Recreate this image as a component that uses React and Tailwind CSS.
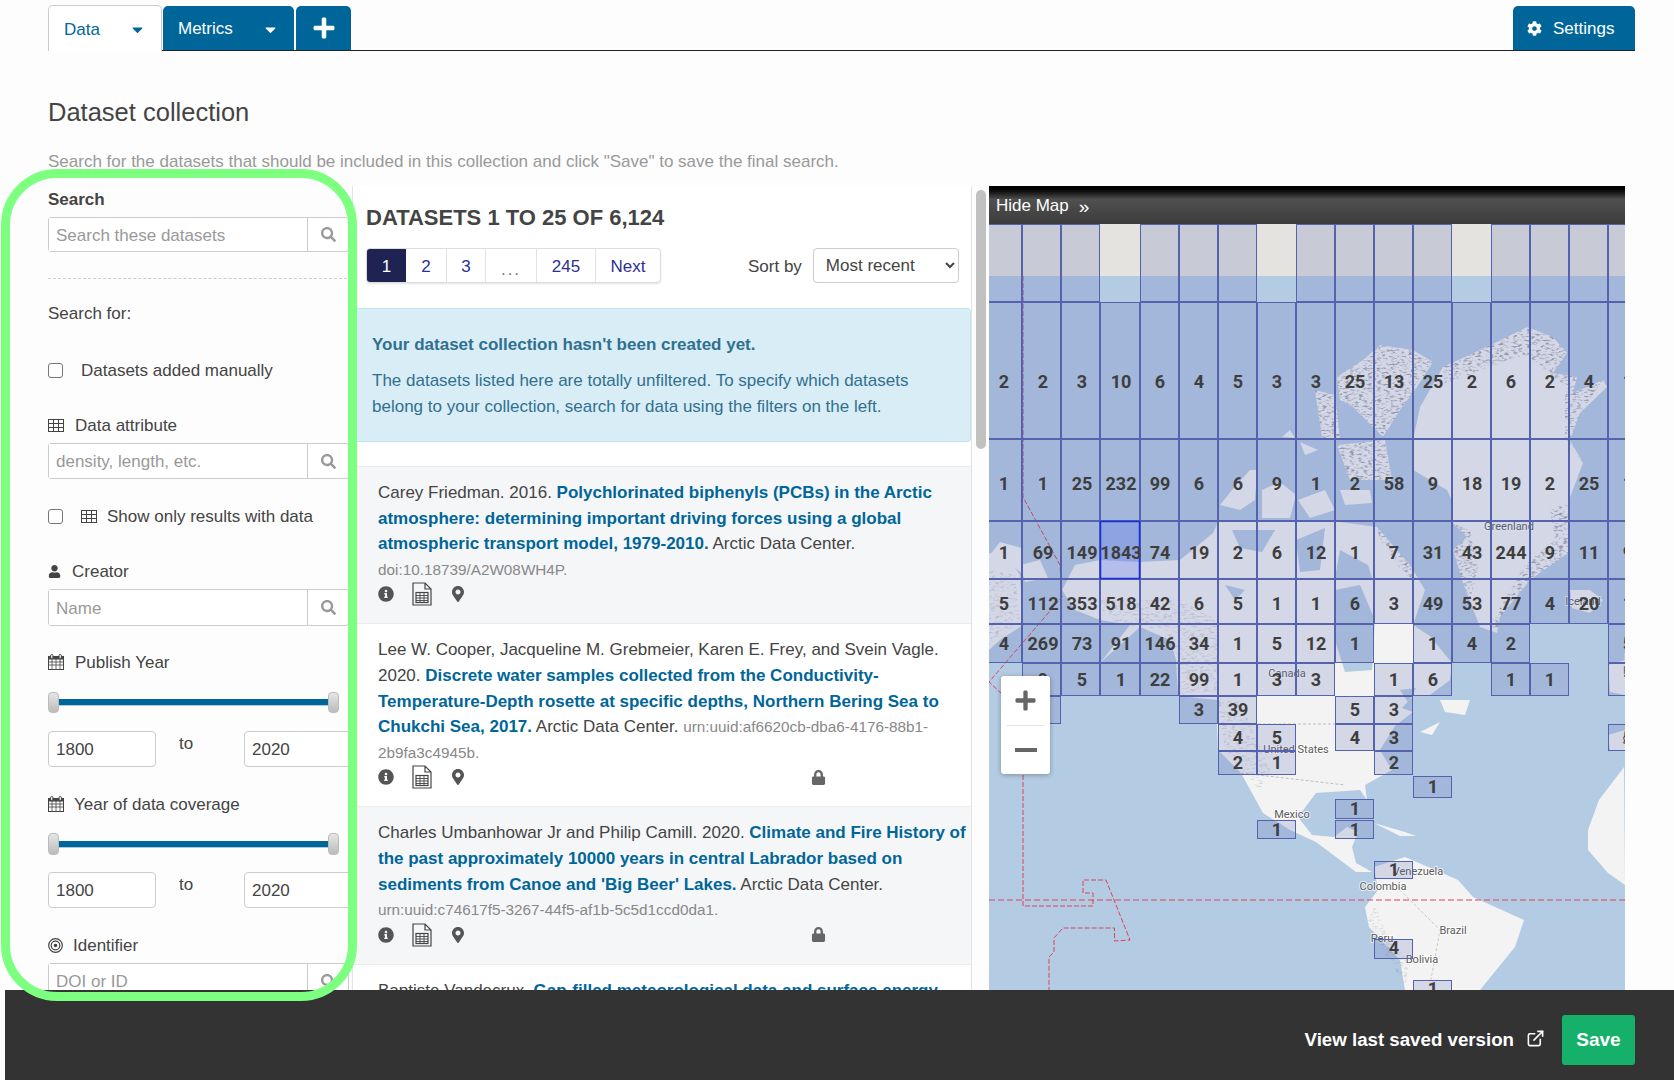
import React from "react";
import { FaCaretDown, FaPlus, FaCog, FaSearch, FaUser, FaInfoCircle, FaMapMarkerAlt, FaLock } from "react-icons/fa";
import { ExternalLink } from "lucide-react";

const X = [983, 1022, 1061, 1100, 1140, 1179, 1218, 1257, 1296, 1335, 1374, 1413, 1452, 1491, 1530, 1569, 1608, 1647];

const rows = [
  { y0: 302, y1: 439, ly: 381, v: ["2","2","3","10","6","4","5","3","3","25","13","25","2","6","2","4","1"] },
  { y0: 439, y1: 521, ly: 483, v: ["1","1","25","232","99","6","6","9","1","2","58","9","18","19","2","25","1"] },
  { y0: 521, y1: 579, ly: 552, v: ["1","69","149","1843","74","19","2","6","12","1","7","31","43","244","9","11","9"] },
  { y0: 579, y1: 624, ly: 603, v: ["5","112","353","518","42","6","5","1","1","6","3","49","53","77","4","20","1"] },
  { y0: 624, y1: 663, ly: 643, v: ["4","269","73","91","146","34","1","5","12","1","","1","4","2","","","5"] },
  { y0: 663, y1: 696, ly: 679, v: ["","9","5","1","22","99","1","3","3","","1","6","","1","1","","1"] },
  { y0: 696, y1: 724, ly: 709, v: ["","1","","","","3","39","","","5","3","","","","","",""] },
  { y0: 724, y1: 751, ly: 737, v: ["","","","","","","4","5","","4","3","","","","","","5"] },
  { y0: 751, y1: 775, ly: 762, v: ["","","","","","","2","1","","","2","","","","","",""] },
  { y0: 776, y1: 798, ly: 786, v: ["","","","","","","","","","","","1","","","","",""] },
  { y0: 799, y1: 819, ly: 808, v: ["","","","","","","","","","1","","","","","","",""] },
  { y0: 820, y1: 839, ly: 829, v: ["","","","","","","","1","","1","","","","","","",""] },
  { y0: 861, y1: 879, ly: 869, v: ["","","","","","","","","","","1","","","","","",""] },
  { y0: 939, y1: 959, ly: 947, v: ["","","","","","","","","","","4","","","","","",""] },
  { y0: 980, y1: 1010, ly: 988, v: ["","","","","","","","","","","","1","","","","",""] },
];

const land = [
  "989,553 1010,560 1020,575 1023,625 1000,640 989,650",
  "1000,542 1022,548 1024,575 1005,560 989,556",
  "1062,590 1075,565 1100,560 1140,562 1180,560 1213,533 1218,522 1262,522 1300,520 1335,522 1340,522 1377,527 1410,565 1425,590 1413,625 1430,636 1452,663 1450,680 1430,695 1413,696 1402,708 1413,712 1395,726 1380,750 1392,770 1365,785 1367,800 1360,790 1316,793 1298,817 1312,835 1334,837 1347,827 1358,832 1352,847 1356,863 1372,872 1356,872 1316,842 1290,830 1263,813 1241,773 1218,750 1217,723 1218,700 1178,696 1176,660 1170,640 1140,627 1100,663 1130,625 1100,620 1075,610",
  "1374,867 1405,857 1440,872 1458,880 1473,897 1524,920 1515,947 1480,990 1405,990 1400,960 1369,927 1365,907 1378,890",
  "1374,823 1405,832 1416,836 1400,836",
  "1624,767 1599,800 1588,830 1588,850 1608,873 1625,885",
  "1443,367 1480,350 1507,337 1527,327 1553,337 1567,353 1553,373 1577,377 1573,393 1603,380 1607,387 1580,413 1570,440 1583,463 1568,503 1568,553 1530,580 1500,617 1497,633 1480,627 1463,583 1453,550 1467,537 1453,523 1453,503 1447,490 1413,470 1413,440 1420,407",
  "1337,377 1363,360 1380,345 1413,350 1433,362 1417,387 1400,410 1383,437 1353,407 1340,400",
  "1315,390 1335,395 1340,440 1322,438",
  "1337,445 1385,440 1392,480 1350,480",
  "1340,490 1370,490 1372,503 1345,505",
  "1220,505 1232,490 1250,470 1257,470 1255,500 1240,510",
  "1262,490 1280,482 1296,495 1290,518 1262,518",
  "1298,500 1325,490 1335,510 1310,518",
  "1290,430 1295,438 1282,437",
  "1300,442 1318,450 1305,455",
  "1570,590 1590,590 1603,600 1590,613 1572,608",
  "1608,665 1625,660 1625,695 1610,692",
  "1608,735 1625,730 1625,751 1610,751",
  "1440,700 1470,700 1465,715 1445,712",
  "1420,732 1440,722 1432,735",
  "1020,565 1040,560 1048,578 1025,582",
  "1075,595 1095,590 1098,605 1080,608",
];

const water = [
  "1335,590 1360,585 1375,620 1372,670 1345,672 1335,640",
  "1225,585 1245,590 1235,600",
  "1232,530 1275,530 1262,552 1240,548",
  "1296,540 1325,528 1320,570 1300,572",
  "1340,550 1368,565 1372,578 1335,578",
  "1400,690 1416,688 1408,702",
];

const strongRelief = [
  "1443,367 1480,350 1527,327 1553,337 1567,353 1553,373 1577,377 1573,393 1603,380 1580,413 1570,440 1583,463 1565,440 1565,385 1525,355 1480,370 1445,385",
  "1337,377 1363,360 1380,345 1413,350 1433,362 1417,387 1400,410 1383,437 1353,407 1340,400",
  "1315,390 1335,395 1340,440 1322,438",
  "1337,445 1385,440 1392,480 1350,480",
  "1568,503 1568,553 1530,580 1500,617 1497,633 1490,625 1525,565 1555,540 1550,510",
  "1453,523 1467,537 1453,550 1463,583 1470,600 1478,570 1470,530",
  "1377,527 1410,565 1417,580 1405,575 1380,540",
];

const softRelief = [
  "1090,600 1180,600 1218,620 1218,690 1180,695 1176,660 1165,630 1120,625",
  "1218,700 1240,700 1270,770 1260,790 1225,750",
  "989,570 1015,575 1020,625 995,640 989,645",
  "1375,905 1385,930 1410,965 1405,985 1380,945 1368,920",
];

const places = [
  ["Greenland", 1509, 526], ["Iceland", 1583, 601], ["Canada", 1287, 673], ["United States", 1296, 749],
  ["Mexico", 1292, 814], ["Venezuela", 1418, 871], ["Colombia", 1383, 886], ["Brazil", 1453, 930],
  ["Peru", 1382, 938], ["Bolivia", 1422, 959], ["United", 1640, 659], ["Kingdom", 1645, 670], ["Spain", 1636, 740],
];

function MapDrawing() {
  return (
    <svg width="636" height="766" viewBox="989 224 636 766" className="block">
      <defs>
        <filter id="relief" x="0" y="0" width="100%" height="100%">
          <feTurbulence type="fractalNoise" baseFrequency="0.22 0.5" numOctaves="2" seed="4" />
          <feColorMatrix values="0 0 0 0 0.28  0 0 0 0 0.28  0 0 0 0 0.33  2.6 2.6 0 0 -2.55" />
        </filter>
        <clipPath id="strong-relief">
          {strongRelief.map((p, i) => (
            <polygon key={i} points={p} />
          ))}
        </clipPath>
        <clipPath id="soft-relief">
          {softRelief.map((p, i) => (
            <polygon key={i} points={p} />
          ))}
        </clipPath>
      </defs>
      <rect x="989" y="224" width="636" height="766" fill="#b4cbe4" />
      <rect x="989" y="224" width="636" height="52" fill="#e4e3df" />
      {land.map((p, i) => (
        <polygon key={i} points={p} fill="#f3f3f3" />
      ))}
      {water.map((p, i) => (
        <polygon key={i} points={p} fill="#b4cbe4" />
      ))}
      <g clipPath="url(#strong-relief)" opacity="0.8">
        <rect x="989" y="224" width="636" height="766" filter="url(#relief)" />
      </g>
      <g clipPath="url(#soft-relief)" opacity="0.3">
        <rect x="989" y="224" width="636" height="766" filter="url(#relief)" />
      </g>
      <polyline points="1218,724 1413,724" fill="none" stroke="#bdbdbd" strokeWidth="1" strokeDasharray="3 2" />
      <polyline points="1241,773 1345,785" fill="none" stroke="#bdbdbd" strokeWidth="1" strokeDasharray="3 2" />
      <polyline points="1400,890 1440,930 1430,985" fill="none" stroke="#c8c8c8" strokeWidth="1" strokeDasharray="3 2" />
      <polyline points="1023,276 1023,497 1060,565 1062,597 989,682 1001,693" fill="none" stroke="#dd4455" strokeWidth="1" strokeDasharray="5 2" />
      <polyline points="1023,775 1023,906 1093,906 1093,893 1083,893 1083,880 1106,880 1130,940 1114.5,941 1114.5,928 1063,928 1054,938 1054,952 1049,957 1049,990" fill="none" stroke="#dd4455" strokeWidth="1" strokeDasharray="5 2" />
      <line x1="989" y1="900" x2="1625" y2="900" stroke="#dd4455" strokeWidth="1" strokeDasharray="6 3" />
      {places.map(([t, x, y]) => (
        <text key={t} x={x} y={y} textAnchor="middle" dominantBaseline="central" fontSize="11" fill="#5c5c5c" stroke="#ffffff" strokeWidth="2" strokeOpacity="0.7" paintOrder="stroke" className="font-[Roboto]">{t}</text>
      ))}
      {X.slice(0, 17).map((x, i) =>
        i === 3 || i === 7 || i === 12 ? null : (
          <rect key={i} x={x + 0.5} y="224.5" width={X[i + 1] - x - 1} height="77" fill="#5a6ab5" fillOpacity="0.2" stroke="#5562ad" strokeWidth="1" />
        )
      )}
      {rows.map((r, ri) =>
        r.v.map((v, i) =>
          v ? (
            <rect key={ri + "-" + i} x={X[i] + 0.5} y={r.y0 + 0.5} width={X[i + 1] - X[i] - 1} height={r.y1 - r.y0 - 1} fill="#5a6ab5" fillOpacity="0.2" stroke="#5562ad" strokeWidth="1" />
          ) : null
        )
      )}
      <rect x="1100.5" y="521.5" width="39" height="57" fill="#4a62ff" fillOpacity="0.22" stroke="#1a2fd8" strokeWidth="1.5" />
      {rows.map((r, ri) =>
        r.v.map((v, i) =>
          v ? (
            <text key={ri + "-t-" + i} x={1004 + 39 * i} y={r.ly} textAnchor="middle" dominantBaseline="central" fontSize="18" fontWeight="700" fill="#3e3e3e" className="font-[Roboto]">{v}</text>
          ) : null
        )
      )}
    </svg>
  );
}

function TableIcon() {
  return (
    <svg width="16" height="13" viewBox="0 0 16 13" fill="none" stroke="currentColor" className="shrink-0">
      <rect x="0.5" y="0.5" width="15" height="12" strokeWidth="1" />
      <path d="M0 4.5h16M0 8.5h16M5.5 0v13M10.5 0v13" strokeWidth="1" />
    </svg>
  );
}

function CalendarIcon() {
  return (
    <svg width="16" height="16" viewBox="0 0 16 16" fill="none" stroke="currentColor" className="shrink-0">
      <rect x="0.5" y="2.5" width="15" height="13" strokeWidth="1" />
      <rect x="0.5" y="2.5" width="15" height="2.5" fill="currentColor" strokeWidth="1" />
      <path d="M0 8h16M0 11h16M4 5v11M8 5v11M12 5v11" strokeWidth="0.8" />
      <rect x="2.7" y="0.5" width="2.2" height="4" rx="1" fill="#fdfdfd" strokeWidth="1" />
      <rect x="11.1" y="0.5" width="2.2" height="4" rx="1" fill="#fdfdfd" strokeWidth="1" />
    </svg>
  );
}

function TargetIcon() {
  return (
    <svg width="15" height="15" viewBox="0 0 15 15" fill="none" stroke="currentColor" className="shrink-0">
      <circle cx="7.5" cy="7.5" r="6.8" strokeWidth="1.2" />
      <circle cx="7.5" cy="7.5" r="4.3" strokeWidth="1.2" />
      <circle cx="7.5" cy="7.5" r="1.8" fill="currentColor" strokeWidth="0" />
    </svg>
  );
}

function SearchInput({ placeholder, h = "h-[36px]" }) {
  return (
    <div className={`flex w-[301px] ${h} bg-white border border-[#ccc] rounded-[3px]`}>
      <input placeholder={placeholder} className="w-[259px] h-full pl-[7px] pr-[8px] pt-[2px] text-[17px] text-[#444] placeholder:text-[#999] outline-none border-r border-[#ccc] bg-white" />
      <div className="flex-1 flex items-center justify-center text-[#999]">
        <FaSearch size={15} />
      </div>
    </div>
  );
}

function Label({ icon, children, gap, mt }) {
  return (
    <div className={`flex items-center h-[24px] text-[17px] text-[#444] ${gap} ${mt}`}>
      {icon}
      <span className="pt-[2px]">{children}</span>
    </div>
  );
}

function Check({ children, mt }) {
  return (
    <div className={`flex items-center h-[24px] text-[17px] text-[#444] ${mt}`}>
      <input type="checkbox" className="appearance-none w-[15px] h-[15px] border border-[#767676] rounded-[3px] bg-white mr-[18px]" />
      {children}
    </div>
  );
}

function Slider({ mt, h }) {
  const handle = "w-[11px] h-full rounded-[4px] border border-[#bbb] bg-linear-to-b from-[#e6e6e6] to-[#bcbcbc]";
  return (
    <div className={`flex items-center w-[291px] ${mt} ${h}`}>
      <div className={handle} />
      <div className="flex-1 h-[7px] bg-[#006699] border-b border-[#a9cde0]" />
      <div className={handle} />
    </div>
  );
}

function Years({ mt }) {
  const cls = "w-[108px] h-full pl-[7px] pr-[8px] pt-[2px] text-[17px] text-[#444] bg-white border border-[#ccc] rounded-[4px] outline-none";
  return (
    <div className={`flex h-[36px] w-[304px] ${mt}`}>
      <input defaultValue="1800" className={cls} />
      <div className="w-[88px] pl-[23px] pt-[1px] text-[17px] leading-[24px] text-[#444]">to</div>
      <input defaultValue="2020" className={cls} />
    </div>
  );
}

function FileTable() {
  return (
    <svg width="20" height="24" viewBox="0 0 20 24" className="text-[#444]">
      <path d="M1 1h12l6 6v16H1z M13 1v6h6" fill="none" stroke="currentColor" strokeWidth="1.2" />
      <rect x="4" y="10.5" width="12" height="10" fill="none" stroke="currentColor" strokeWidth="1.2" />
      <path d="M4 13.5h12M4 16h12M4 18.5h12M8 10.5v10M12 10.5v10" stroke="currentColor" strokeWidth="0.9" />
    </svg>
  );
}

function Item({ bg, lock, children }) {
  return (
    <div className={`${bg} border-b border-[#ececec] pt-[13px] pb-[17px] pl-[25px] pr-[3px] text-[17px] leading-[25.6px] text-[#444]`}>
      <div>{children}</div>
      <div className="flex items-center h-[24px] text-[#555]">
        <FaInfoCircle size={16} />
        <span className="ml-[18px]"><FileTable /></span>
        <span className="ml-[18px]"><FaMapMarkerAlt size={16} /></span>
        {lock && <span className="ml-[345px] text-[#666]"><FaLock size={15} /></span>}
      </div>
    </div>
  );
}

const A = ({ children }) => <a className="font-bold text-[#006699]">{children}</a>;
const Id = ({ children }) => <span className="text-[15.3px] text-[#888]">{children}</span>;

export default function App() {
  const pageCell = "flex items-center justify-center h-full pt-[2px] border-r border-[#e2e2e2] text-[#2b2f96]";
  return (
    <div className="w-full h-[1080px] flex flex-col overflow-hidden relative bg-[#fdfdfd] font-['Liberation_Sans',Arial,sans-serif] text-[#444]">
      <div className="h-[186px] shrink-0 pl-[48px] pr-[39px]">
        <div className="flex items-end h-[51px] border-b border-[#222] text-[17px]">
          <div className="w-[114px] h-[46px] -mb-px bg-white border border-b-0 border-[#ccc] rounded-t-[5px] flex items-center justify-between pl-[15px] pr-[15px] pt-[2px] text-[#006699]">
            <span>Data</span>
            <FaCaretDown size={17} />
          </div>
          <div className="ml-[1px] w-[131px] h-[44px] bg-[#006699] rounded-t-[5px] flex items-center justify-between pl-[15px] pr-[15px] pt-[2px] text-white">
            <span>Metrics</span>
            <FaCaretDown size={17} />
          </div>
          <div className="ml-[2px] w-[55px] h-[44px] bg-[#006699] rounded-t-[5px] flex items-center justify-center text-white">
            <FaPlus size={24} />
          </div>
          <div className="ml-auto w-[122px] h-[44px] bg-[#006699] rounded-t-[5px] flex items-center pl-[14px] text-white">
            <FaCog size={15} />
            <span className="ml-[11px] pt-[2px]">Settings</span>
          </div>
        </div>
        <h1 className="mt-[46px] text-[25.5px] leading-[30px] text-[#444]">Dataset collection</h1>
        <p className="mt-[23px] text-[17px] leading-[24px] text-[#999]">Search for the datasets that should be included in this collection and click "Save" to save the final search.</p>
      </div>

      <div className="flex-1 min-h-0 flex overflow-hidden">
        <div className="w-[304px] ml-[48px] shrink-0 pt-[1px]">
          <div className="h-[24px] leading-[24px] pt-[1px] text-[17px] font-bold text-[#444]">Search</div>
          <div className="mt-[6px]"><SearchInput placeholder="Search these datasets" h="h-[35px]" /></div>
          <div className="mt-[26px] border-t border-dashed border-[#ccc]" />
          <div className="mt-[22px] h-[24px] leading-[24px] pt-[1px] text-[17px] text-[#444]">Search for:</div>
          <Check mt="mt-[33px]"><span className="pt-[2px]">Datasets added manually</span></Check>
          <Label mt="mt-[31px]" gap="gap-[11px]" icon={<TableIcon />}>Data attribute</Label>
          <div className="mt-[6px]"><SearchInput placeholder="density, length, etc." /></div>
          <Check mt="mt-[25px]">
            <TableIcon />
            <span className="ml-[10px] pt-[2px]">Show only results with data</span>
          </Check>
          <Label mt="mt-[31px]" gap="gap-[11px]" icon={<FaUser size={13} />}>Creator</Label>
          <div className="mt-[6px]"><SearchInput placeholder="Name" h="h-[37px]" /></div>
          <Label mt="mt-[24px]" gap="gap-[11px]" icon={<CalendarIcon />}>Publish Year</Label>
          <Slider mt="mt-[18px]" h="h-[21px]" />
          <Years mt="mt-[18px]" />
          <Label mt="mt-[25px]" gap="gap-[10px]" icon={<CalendarIcon />}>Year of data coverage</Label>
          <Slider mt="mt-[17px]" h="h-[22px]" />
          <Years mt="mt-[17px]" />
          <Label mt="mt-[25px]" gap="gap-[10px]" icon={<TargetIcon />}>Identifier</Label>
          <div className="mt-[6px]"><SearchInput placeholder="DOI or ID" /></div>
        </div>

        <div className="w-[620px] shrink-0 bg-white border-l border-r border-[#e3e3e3]">
          <div className="pl-[13px] pt-[18px] pr-[12px]">
            <h2 className="h-[28px] leading-[28px] text-[22px] font-bold text-[#444]">DATASETS 1 TO 25 OF 6,124</h2>
            <div className="mt-[16px] flex items-center h-[35px]">
              <div className="flex w-[295px] h-[35px] bg-white border border-[#ddd] rounded-[4px] shadow-[0_1px_2px_rgba(0,0,0,0.12)] text-[17px] overflow-hidden">
                <div className="w-[39px] h-full pt-[2px] flex items-center justify-center bg-[#1e2352] text-white">1</div>
                <div className={`${pageCell} w-[41px]`}>2</div>
                <div className={`${pageCell} w-[39px]`}>3</div>
                <div className={`${pageCell} w-[51px] text-[#777] tracking-[2px]`}><span className="pt-[7px]">...</span></div>
                <div className={`${pageCell} w-[59px]`}>245</div>
                <div className="flex-1 flex items-center justify-center pt-[2px] text-[#2b2f96]">Next</div>
              </div>
              <span className="ml-[87px] pt-[2px] text-[17px] text-[#444]">Sort by</span>
              <select defaultValue="recent" className="ml-[11px] w-[146px] h-[35px] pl-[8px] text-[17px] text-[#444] bg-white border border-[#ccc] rounded-[4px]">
                <option value="recent">Most recent</option>
              </select>
            </div>
          </div>
          <div className="mt-[25px] h-[134px] bg-[#d9edf7] border border-[#bce8f1] border-l-0 rounded-r-[4px] pl-[19px] pt-[23px] text-[17px] text-[#31708f]">
            <div className="font-bold leading-[26px]">Your dataset collection hasn't been created yet.</div>
            <div className="mt-[10px] leading-[26px]">The datasets listed here are totally unfiltered. To specify which datasets<br />belong to your collection, search for data using the filters on the left.</div>
          </div>
          <div className="mt-[24px] border-t border-[#ececec]">
            <Item bg="bg-[#f5f6f8]">
              Carey Friedman. 2016. <A>Polychlorinated biphenyls (PCBs) in the Arctic atmosphere: determining important driving forces using a global atmospheric transport model, 1979-2010.</A> Arctic Data Center. <Id>doi:10.18739/A2W08WH4P.</Id>
            </Item>
            <Item bg="bg-white" lock>
              Lee W. Cooper, Jacqueline M. Grebmeier, Karen E. Frey, and Svein Vagle. 2020. <A>Discrete water samples collected from the Conductivity-Temperature-Depth rosette at specific depths, Northern Bering Sea to Chukchi Sea, 2017.</A> Arctic Data Center. <Id>urn:uuid:af6620cb-dba6-4176-88b1-2b9fa3c4945b.</Id>
            </Item>
            <Item bg="bg-[#f5f6f8]" lock>
              Charles Umbanhowar Jr and Philip Camill. 2020. <A>Climate and Fire History of the past approximately 10000 years in central Labrador based on sediments from Canoe and 'Big Beer' Lakes.</A> Arctic Data Center. <Id>urn:uuid:c74617f5-3267-44f5-af1b-5c5d1ccd0da1.</Id>
            </Item>
            <Item bg="bg-white">
              Baptiste Vandecrux. <A>Gap-filled meteorological data and surface energy budget at Greenland sites.</A> Arctic Data Center.
            </Item>
          </div>
        </div>

        <div className="w-[17px] shrink-0 pl-[4px] pt-[4px]">
          <div className="w-[10px] h-[259px] rounded-[5px] bg-[#c1c1c1]" />
        </div>

        <div className="w-[636px] shrink-0 relative">
          <div className="h-[38px] flex items-center pt-[2px] pl-[7px] text-[17px] text-white bg-linear-to-b from-black via-[#505050] via-35% to-[#3c3c3c]">
            <span>Hide Map</span>
            <span className="ml-[10px] text-[19px] leading-none">»</span>
          </div>
          <MapDrawing />
          <div className="absolute left-[12px] top-[490px] w-[49px] h-[98px] bg-white rounded-[3px] shadow-[0_1px_5px_rgba(0,0,0,0.3)] flex flex-col items-center text-[#666]">
            <div className="h-[49px] flex items-center justify-center"><FaPlus size={23} /></div>
            <div className="w-[37px] border-t border-[#e5e5e5]" />
            <div className="flex-1 flex items-center justify-center"><div className="w-[22px] h-[4px] bg-[#666]" /></div>
          </div>
        </div>
      </div>

      <div className="h-[90px] shrink-0 ml-[5px] bg-[#333] flex items-start justify-end pr-[39px] pt-[25px] relative">
        <span className="mt-[13px] text-[18.7px] leading-[24px] font-bold text-white">View last saved version</span>
        <ExternalLink size={19} className="ml-[12px] mt-[14px] text-white" />
        <div className="ml-[17px] w-[73px] h-[50px] rounded-[3px] bg-[#15b06a] flex items-center justify-center text-[19px] font-bold text-white">Save</div>
      </div>

      <div className="absolute left-[1px] top-[169px] w-[356px] h-[832px] border-[9px] border-[#7dff80] rounded-[56px] pointer-events-none" />
    </div>
  );
}
